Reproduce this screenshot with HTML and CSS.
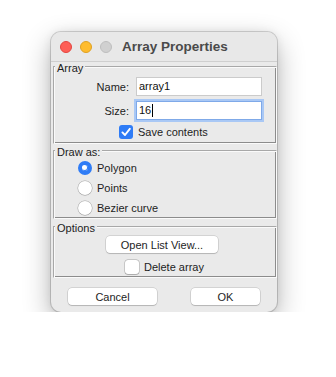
FILE: index.html
```html
<!DOCTYPE html>
<html>
<head>
<meta charset="utf-8">
<link rel="stylesheet" href="styles.css">
</head>
<body>
<div class="window">
  <div class="titlebar">
    <span class="light red"></span>
    <span class="light yellow"></span>
    <span class="light gray"></span>
    <span class="title">Array Properties</span>
  </div>
  <div class="frame frame-array">
    <span class="legend">Array</span>
    <div class="form-grid">
      <span class="field-label">Name:</span>
      <div class="entry">array1</div>
      <span class="field-label">Size:</span>
      <div class="entry focused">16<span class="caret"></span></div>
    </div>
    <div class="check-row save-row">
      <span class="checkbox checked">
        <svg viewBox="0 0 14 14" width="14" height="14"><path d="M3.4 7.4 L6 10 L10.8 3.8" fill="none" stroke="#fff" stroke-width="1.9" stroke-linecap="round" stroke-linejoin="round"/></svg>
      </span>
      <span class="check-text">Save contents</span>
    </div>
  </div>
  <div class="frame frame-draw">
    <span class="legend">Draw as:</span>
    <div class="radio-list">
      <div class="radio-row"><span class="radio selected"></span><span class="radio-text">Polygon</span></div>
      <div class="radio-row"><span class="radio"></span><span class="radio-text">Points</span></div>
      <div class="radio-row"><span class="radio"></span><span class="radio-text">Bezier curve</span></div>
    </div>
  </div>
  <div class="frame frame-options">
    <span class="legend">Options</span>
    <div class="options-body">
      <div class="button list-button">Open List View...</div>
      <div class="check-row delete-row">
        <span class="checkbox"></span>
        <span class="check-text">Delete array</span>
      </div>
    </div>
  </div>
  <div class="button-row">
    <div class="button cancel">Cancel</div>
    <div class="button ok">OK</div>
  </div>
</div>
</body>
</html>
```

FILE: styles.css
```css
html, body {
  margin: 0;
  padding: 0;
  background: #ffffff;
}
body {
  padding: 32px 0 0 51px;
  font-family: "Liberation Sans", Arial, sans-serif;
  font-size: 11px;
  color: #1d1d1d;
}
.window {
  width: 226px;
  height: 280px;
  box-sizing: border-box;
  background: #eaeaea;
  border-radius: 10px;
  box-shadow: 0 0 0 1px rgba(0,0,0,0.15), 0 10px 28px rgba(0,0,0,0.3), 0 0 10px rgba(0,0,0,0.08);
  overflow: hidden;
  display: flex;
  flex-direction: column;
}
.titlebar {
  height: 29px;
  flex: none;
  border-bottom: 1px solid #cfcfcf;
  background: #e8e8e8;
  display: flex;
  align-items: center;
  padding-left: 9px;
}
.light {
  width: 12px;
  height: 12px;
  border-radius: 50%;
  box-sizing: border-box;
  margin-right: 8px;
}
.red { background: #fe5f57; border: 0.5px solid #e2463f; }
.yellow { background: #febc2e; border: 0.5px solid #dea123; }
.gray { background: #d0d0d0; border: 0.5px solid #bebebe; margin-right: 10px; }
.title {
  font-weight: bold;
  font-size: 13.5px;
  color: #4a4a4a;
}
.frame {
  position: relative;
  margin-left: 2px;
  box-sizing: border-box;
  border-top: 1px solid #a8a8a8;
  border-left: 1px solid #a8a8a8;
  border-right: 1px solid #fafafa;
  border-bottom: 1px solid #fafafa;
  box-shadow: inset 1px 1px 0 #fafafa, inset -1px -1px 0 #8c8c8c;
}
.legend {
  position: absolute;
  left: 1px;
  top: -5px;
  padding: 0 2px;
  line-height: 13px;
  background: #eaeaea;
  color: #1d1d1d;
}
.frame-array {
  margin-top: 4px;
  height: 78px;
  padding: 10px 0 0 0;
}
.form-grid {
  display: grid;
  grid-template-columns: 75px 126px;
  column-gap: 7px;
  row-gap: 5px;
  align-items: center;
}
.field-label {
  text-align: right;
  color: #1d1d1d;
}
.entry {
  height: 19px;
  box-sizing: border-box;
  background: #ffffff;
  border: 1px solid #cbcbcb;
  padding: 0 0 0 2px;
  line-height: 17px;
  font-size: 11px;
  color: #111;
  display: flex;
  align-items: center;
}
.entry.focused {
  border-color: #7fa9e8;
  box-shadow: 0 0 0 2px #a9c8f5;
}
.caret {
  display: inline-block;
  width: 1px;
  height: 13px;
  background: #000;
  margin-left: 1px;
}
.check-row {
  display: flex;
  align-items: center;
  gap: 5px;
  height: 14px;
}
.save-row {
  margin: 5px 0 0 65px;
}
.checkbox {
  width: 14px;
  height: 14px;
  box-sizing: border-box;
  border-radius: 3px;
  background: #ffffff;
  box-shadow: 0 0 0 0.5px rgba(0,0,0,0.28), 0 0.5px 1px rgba(0,0,0,0.15);
  display: flex;
  flex: none;
}
.checkbox.checked {
  background: #2f7cf6;
  box-shadow: none;
}
.check-text {
  font-size: 11px;
}
.frame-draw {
  margin-top: 6px;
  height: 69px;
  padding: 10px 0 0 24px;
}
.radio-list {
  display: flex;
  flex-direction: column;
  gap: 6px;
}
.radio-row {
  display: flex;
  align-items: center;
  height: 14px;
  gap: 5px;
}
.radio {
  width: 14px;
  height: 14px;
  border-radius: 50%;
  background: #fff;
  box-shadow: 0 0 0 0.5px rgba(0,0,0,0.28), 0 0.5px 1px rgba(0,0,0,0.15);
  box-sizing: border-box;
  flex: none;
}
.radio.selected {
  background: #2f7cf6;
  border: 4.5px solid #2f7cf6;
  background-clip: padding-box;
  box-shadow: none;
  position: relative;
}
.radio.selected::after {
  content: "";
  position: absolute;
  left: 0;
  top: 0;
  width: 5px;
  height: 5px;
  border-radius: 50%;
  background: #fff;
}
.radio-text {
  font-size: 11px;
}
.frame-options {
  margin-top: 7px;
  height: 52px;
  padding: 9px 0 0 0;
}
.options-body {
  display: flex;
  flex-direction: column;
  align-items: flex-start;
}
.button {
  height: 17px;
  box-sizing: border-box;
  background: #ffffff;
  border-radius: 4px;
  box-shadow: 0 0 0 0.5px rgba(0,0,0,0.2), 0 1px 1px rgba(0,0,0,0.14);
  display: flex;
  align-items: center;
  justify-content: center;
  font-size: 11px;
  color: #1d1d1d;
}
.list-button {
  width: 112px;
  margin-left: 52px;
}
.delete-row {
  margin: 7px 0 0 71px;
}
.button-row {
  display: flex;
  gap: 34px;
  margin-top: 10px;
  padding-left: 17px;
}
.cancel { width: 89px; }
.ok { width: 69px; }
```
